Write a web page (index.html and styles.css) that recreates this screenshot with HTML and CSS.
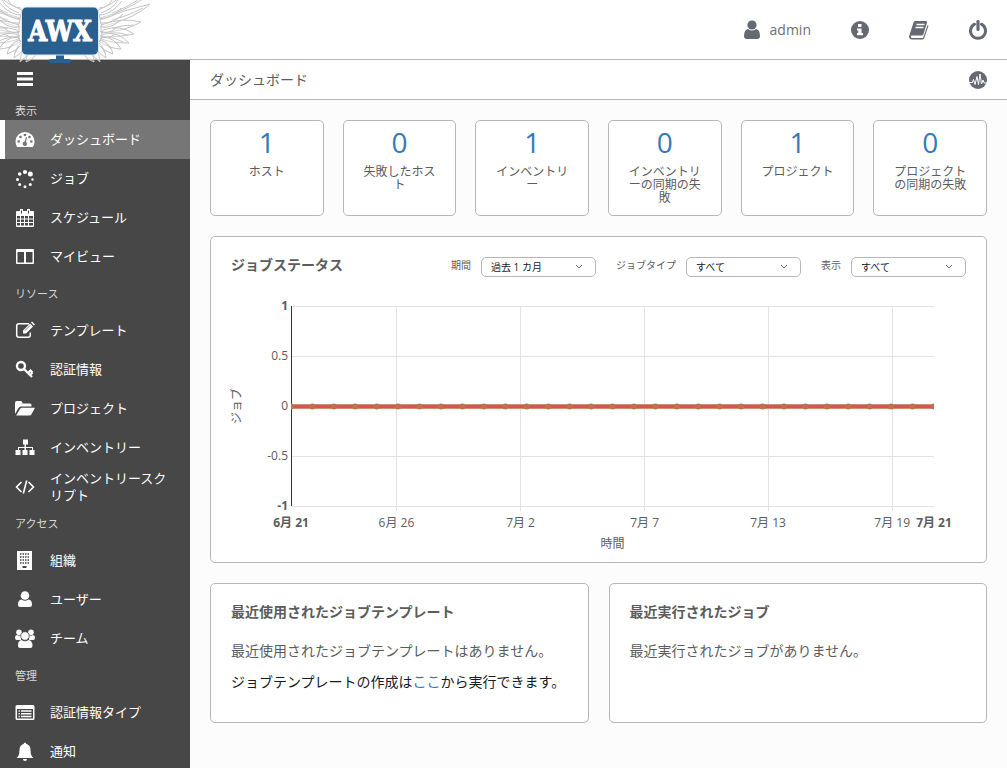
FILE: index.html
```html
<!DOCTYPE html>
<html lang="ja">
<head>
<meta charset="utf-8">
<meta name="viewport" content="width=device-width, initial-scale=1">
<title>AWX</title>
<link rel="stylesheet" href="styles.css">
</head>
<body>
<header class="topbar">
  <a class="logo" href="#" aria-label="AWX">
    <svg width="150" height="64" viewBox="0 0 150 64">
      <defs>
        <g id="wing" class="feather">
          <path d="M98 10Q112 5 124-6L146-3Q124 12 100 18Z"/>
          <path d="M100 20Q124 10 150 4Q136 18 102 27Z"/>
          <path d="M101 25Q122 17 141 22Q126 31 101 33Z"/>
          <path d="M103 30Q120 24 134 34Q120 37 101 37Z"/>
          <path d="M104 34Q118 31 129 43Q114 44 100 39Z"/>
          <path d="M103 37Q115 38 121 49Q110 49 99 41Z"/>
          <path d="M101 40Q111 44 113 54Q105 52 97 44Z"/>
          <path d="M99 43Q106 50 106 58Q99 54 95 47Z"/>
          <path d="M95 48Q100 54 100 62Q93 57 90 51Z"/>
          <path d="M91 51Q94 57 94 62Q88 60 84 55M112 13Q126 8 138 0M112 20Q128 16 143 8M112 28Q124 25 134 25M110 33Q120 32 128 35M108 37Q116 38 123 42"/>
          <path d="M98 15Q110 16 122 1M99 19Q113 18 121 8M100 23Q114 24 123 14M100 27Q111 29 119 21M100 31Q108 35 116 28M100 35Q107 39 114 35M99 8Q108 8 112 0M101 13Q113 9 118 0M105 42L111 49M101 46L105 53"/>
        </g>
      </defs>
      <use href="#wing"/>
      <use href="#wing" transform="matrix(-1 0 0 1 120 0)"/>
      <path d="M56 53h8v6h5q2 0 2 2t-2 2H51q-2 0-2-2t2-2h5z" fill="#2a6090"/>
      <rect x="21.500" y="7" width="77" height="48" rx="5" fill="#2a6090" stroke="#dfe7ee"/>
      <text class="logo-text" x="60" y="41" text-anchor="middle">AWX</text>
    </svg>
  </a>
  <nav class="topnav">
    <a class="user" href="#">
      <svg width="16" height="20" viewBox="0 0 16 20"><circle cx="8" cy="5" r="4.600"/><path d="M4 9q4 3 8 0 4 1 4 7 0 3-3 3H3q-3 0-3-3 0-6 4-7z"/></svg>
      <span>admin</span>
    </a>
    <a href="#" aria-label="情報"><svg width="18" height="18" viewBox="0 0 18 18"><circle cx="9" cy="9" r="9"/><path fill="#fff" d="M7 3h3.500v3H7zM6 7.500h4.500V12H12v2.200H6V12h1.300V9.500H6z"/></svg></a>
    <a href="#" aria-label="ドキュメント"><svg width="20" height="20" viewBox="0 0 20 20"><path d="M6 1h11q1.500 0 1 1.500L14.500 14q-.5 1.500-2 1.500H3q-1.500 0-1.300 1.200T3.500 18H14l4.700-13 .8.800-4.300 12.500Q14.800 19.500 13.500 19.500H3q-3-.5-3-3L4.500 2.500Q5 1 6 1z"/><path d="M7.500 4.500h8M6.500 7.500h8" stroke="#fff" stroke-width="1.300"/></svg></a>
    <a href="#" aria-label="ログアウト"><svg width="18" height="20" viewBox="0 0 18 20"><path d="M5.500 4.200A7.500 7.500 0 1 0 12.500 4.200" fill="none" stroke="#646972" stroke-width="3" stroke-linecap="round"/><path d="M9 1.500v8" stroke="#646972" stroke-width="3.200" stroke-linecap="round"/></svg></a>
  </nav>
</header>
<div class="layout">
  <aside class="sidebar">
    <button class="burger" type="button" aria-label="メニュー"><svg width="16" height="14" viewBox="0 0 16 14"><path d="M0 0h16v3H0zM0 5.500h16v3H0zM0 11h16v3H0z"/></svg></button>
    <h2 class="side-head side-head-first">表示</h2>
    <a class="item active" href="#"><svg width="20" height="20" viewBox="0 0 20 20"><path d="M10 2A9.500 9.500 0 0 0 .5 11.500q0 3 1.500 5.500h16q1.500-2.500 1.500-5.500A9.500 9.500 0 0 0 10 2z"/><g fill="#767676"><circle cx="3.700" cy="11.500" r="1.300"/><circle cx="5.500" cy="7" r="1.300"/><circle cx="10" cy="5" r="1.300"/><circle cx="14.500" cy="7" r="1.300"/><circle cx="16.300" cy="11.500" r="1.300"/><path d="M11 7l1 .3-1 4.700a2.200 2.200 0 1 1-1.500-.3z"/></g></svg><span>ダッシュボード</span></a>
    <a class="item" href="#"><svg width="20" height="20" viewBox="0 0 20 20"><circle cx="10" cy="3" r="2.100"/><circle cx="15.300" cy="5" r="2.500"/><circle cx="17.500" cy="10.500" r="1.200"/><circle cx="15.300" cy="15.500" r="1.500"/><circle cx="10" cy="17.800" r="1.500"/><circle cx="4.700" cy="15.500" r="1.500"/><circle cx="2.500" cy="10.500" r="1.500"/><circle cx="4.700" cy="5" r="1.800"/></svg><span>ジョブ</span></a>
    <a class="item" href="#"><svg width="20" height="20" viewBox="0 0 20 20"><path fill-rule="evenodd" d="M2 3h3V1h3v2h4V1h3v2h3q1 0 1 1v14q0 1-1 1H2q-1 0-1-1V4q0-1 1-1zm0 5v2.500h3V8zm4 0v2.500h3V8zm4 0v2.500h3V8zm4 0v2.500h4V8zM2 11.500V14h3v-2.500zm4 0V14h3v-2.500zm4 0V14h3v-2.500zm4 0V14h4v-2.500zM2 15v2.500h3V15zm4 0v2.500h3V15zm4 0v2.500h3V15zm4 0v2.500h4V15z"/><path d="M6.500 2.500v3M13.500 2.500v3" stroke="#474747"/></svg><span>スケジュール</span></a>
    <a class="item" href="#"><svg width="20" height="20" viewBox="0 0 20 20"><path fill-rule="evenodd" d="M2 2h16q1 0 1 1v13q0 1-1 1H2q-1 0-1-1V3q0-1 1-1zm.500 3v10.500H9V5zM11 5v10.500h6.500V5z"/></svg><span>マイビュー</span></a>
    <h2 class="side-head">リソース</h2>
    <a class="item" href="#"><svg width="20" height="20" viewBox="0 0 20 20"><path d="M14 2.700H4Q1.700 2.700 1.700 5v9Q1.700 16.300 4 16.300h9q2.300 0 2.300-2.300v-2.500" fill="none" stroke="#fff" stroke-width="1.500"/><path d="M8 9.500L15 2.500l3 3-7 7H8zM16 1.500l1-1 3 3-1 1z"/><path d="M10 9.500l5-5" stroke="#474747" stroke-width=".7"/></svg><span>テンプレート</span></a>
    <a class="item" href="#"><svg width="20" height="20" viewBox="0 0 20 20"><circle cx="6" cy="6" r="4" fill="none" stroke="#fff" stroke-width="2.400"/><path d="M9 9l8 8M13 13l2.500-2.500 2 2M15 15l2.500-2.500" fill="none" stroke="#fff" stroke-width="2.200"/></svg><span>認証情報</span></a>
    <a class="item" href="#"><svg width="20" height="20" viewBox="0 0 20 20"><path d="M0 15V4q0-2 2-2h4q1.500 0 1.500 2.500H15q1.500 0 1.500 1.500v1.500H6q-1.500 0-2.500 1.500zM1.200 16.500L5 10q.7-1.200 2-1.200h13l-3.500 6.500q-.7 1.200-2 1.200z"/></svg><span>プロジェクト</span></a>
    <a class="item" href="#"><svg width="20" height="20" viewBox="0 0 20 20"><path d="M8 1.500h5v5h-2V9h7v3h1.500v5h-5v-5H17v-2h-6v2h1.500v5h-5v-5H9.500v-2H4v2h1.500v5h-5v-5H3V9h6.500V6.500H8z"/></svg><span>インベントリー</span></a>
    <a class="item" href="#"><svg width="20" height="20" viewBox="0 0 20 20"><path d="M6.500 5L1.500 10l5 5M13.500 5l5 5-5 5M11.700 3.500L8.300 16.500" fill="none" stroke="#fff" stroke-width="1.600"/></svg><span>インベントリースクリプト</span></a>
    <h2 class="side-head">アクセス</h2>
    <a class="item" href="#"><svg width="20" height="20" viewBox="0 0 20 20"><path d="M2 0h15v19H2z"/><path d="M5 3h9M5 6h9M5 9h9M5 12h9" stroke="#474747" stroke-width="1.300" stroke-dasharray="1.500 1"/><path d="M7.500 15h4v2h-4z" fill="#474747"/></svg><span>組織</span></a>
    <a class="item" href="#"><svg width="20" height="20" viewBox="0 0 20 20"><circle cx="10" cy="5.500" r="4.300"/><path d="M6.500 9.500q3.500 2.500 7 0 3.500.5 3.500 5 0 2.500-2.500 2.500h-9Q3 17 3 14.500q0-4.500 3.500-5z"/></svg><span>ユーザー</span></a>
    <a class="item" href="#"><svg width="20" height="20" viewBox="0 0 20 20"><circle cx="4" cy="3.300" r="2.800"/><circle cx="16" cy="3.300" r="2.800"/><path d="M2 6q2 1.500 4 0v5H2q-2 0-2-2.500T2 6zM18 6q-2 1.500-4 0v5h4q2 0 2-2.500T18 6z"/><path d="M6.500 11q3.500 2.500 7 0 4 .5 4 5.500 0 2.500-2.500 2.500H5.500Q3 19 3 16.500q0-5 3.500-5.500z"/><circle cx="10" cy="7" r="4.300" stroke="#474747" stroke-width=".8"/></svg><span>チーム</span></a>
    <h2 class="side-head">管理</h2>
    <a class="item" href="#"><svg width="20" height="20" viewBox="0 0 20 20"><path fill-rule="evenodd" d="M2 2h16q1.500 0 1.500 1.500v12Q19.500 17 18 17H2Q.5 17 .5 15.500v-12Q.5 2 2 2zm0 4v9.500h16V6z"/><path d="M3.500 8h1.300M3.500 10.700h1.300M3.500 13.400h1.300M6 8h10.500M6 10.700h10.500M6 13.400h10.500" stroke="#fff" stroke-width="1.500"/></svg><span>認証情報タイプ</span></a>
    <a class="item" href="#"><svg width="20" height="20" viewBox="0 0 20 20"><path d="M10 .5q1.300 0 1.300 1.500Q15.500 3 15.500 8q0 6 3 8h-17q3-2 3-8 0-5 4.200-6Q8.700.5 10 .5zM8 17h4q0 2-2 2t-2-2z"/></svg><span>通知</span></a>
  </aside>
  <main class="main">
    <div class="crumbs">
      <h1>ダッシュボード</h1>
      <a href="#" aria-label="アクティビティーストリーム"><svg width="18" height="18" viewBox="0 0 18 18"><circle cx="9" cy="9" r="9" fill="#646972"/><path d="M0 11.500h3.500l1-3 1.500 5 2-8 1.500 8L11 3l1.500 10 1.500-4 1.200 3H18" fill="none" stroke="#fff"/></svg></a>
    </div>
    <div class="content">
      <section class="counts">
        <a class="card count" href="#"><b>1</b><span>ホスト</span></a>
        <a class="card count" href="#"><b>0</b><span>失敗したホスト</span></a>
        <a class="card count" href="#"><b>1</b><span>インベントリー</span></a>
        <a class="card count" href="#"><b>0</b><span>インベントリーの同期の失敗</span></a>
        <a class="card count" href="#"><b>1</b><span>プロジェクト</span></a>
        <a class="card count" href="#"><b>0</b><span>プロジェクトの同期の失敗</span></a>
      </section>
      <section class="card graph">
        <div class="graph-head">
          <h2>ジョブステータス</h2>
          <div class="filters">
            <label for="period">期間</label>
            <span class="pick"><select id="period"><option>過去 1 カ月</option></select><svg width="8" height="6" viewBox="0 0 8 6"><path d="M1 1l3 3 3-3"/></svg></span>
            <label for="type">ジョブタイプ</label>
            <span class="pick"><select id="type"><option>すべて</option></select><svg width="8" height="6" viewBox="0 0 8 6"><path d="M1 1l3 3 3-3"/></svg></span>
            <label for="view">表示</label>
            <span class="pick"><select id="view"><option>すべて</option></select><svg width="8" height="6" viewBox="0 0 8 6"><path d="M1 1l3 3 3-3"/></svg></span>
          </div>
        </div>
        <div class="plot">
          <svg id="chart" class="chart" width="100%" height="245">
            <g class="grid">
              <line x1="0" x2="100%" y1="0" y2="0"/><line x1="0" x2="100%" y1="50" y2="50"/><line x1="0" x2="100%" y1="150" y2="150"/><line x1="0" x2="100%" y1="200" y2="200"/>
              <line x1="16.400%" x2="16.400%" y1="0" y2="205"/><line x1="35.700%" x2="35.700%" y1="0" y2="205"/><line x1="55%" x2="55%" y1="0" y2="205"/><line x1="74.200%" x2="74.200%" y1="0" y2="205"/><line x1="93.500%" x2="93.500%" y1="0" y2="205"/>
            </g>
            <line class="axis" x1="0" x2="0" y1="0" y2="200"/>
            <svg x="0" y="0" width="100%" height="200">
              <rect class="series-under" x="0" y="98" width="100%" height="5"/>
              <rect class="series" x="0" y="99" width="100%" height="3"/>
              <g id="points" class="points"></g>
            </svg>
            <g class="ylab">
              <text class="strong" x="-3" y="4">1</text><text x="-3" y="54">0.5</text><text x="-3" y="104">0</text><text x="-3" y="154">-0.5</text><text class="strong" x="-3" y="204">-1</text>
            </g>
            <g class="xlab">
              <text class="strong" x="0" y="221">6月 21</text><text x="16.400%" y="221">6月 26</text><text x="35.700%" y="221">7月 2</text><text x="55%" y="221">7月 7</text><text x="74.200%" y="221">7月 13</text><text x="93.500%" y="221">7月 19</text><text class="strong" x="100%" y="221">7月 21</text>
              <text x="50%" y="242">時間</text>
              <text transform="translate(-50 100) rotate(-90)">ジョブ</text>
            </g>
          </svg>
        </div>
      </section>
      <section class="lists">
        <article class="card list"><h2>最近使用されたジョブテンプレート</h2><p>最近使用されたジョブテンプレートはありません。</p><p class="hint">ジョブテンプレートの作成は<a href="#">ここ</a>から実行できます。</p></article>
        <article class="card list"><h2>最近実行されたジョブ</h2><p>最近実行されたジョブがありません。</p></article>
      </section>
    </div>
  </main>
</div>
<script src="chart.js"></script>
</body>
</html>
```
FILE: chart.js
```js
const points = document.getElementById('points');
for (let day = 0; day <= 30; day++) {
  const dot = document.createElementNS('http://www.w3.org/2000/svg', 'circle');
  dot.setAttribute('cx', (day / 30 * 100) + '%');
  dot.setAttribute('cy', 100.5);
  dot.setAttribute('r', 3);
  points.append(dot);
}
```
FILE: styles.css
```css
* { box-sizing: border-box; }
body {
  margin: 0;
  height: 100vh;
  display: flex;
  flex-direction: column;
  overflow: hidden;
  font: 14px/16px "Open Sans", "Noto Sans CJK JP", sans-serif;
  color: #5c5c5c;
  background: #fcfcfc;
}
h1, h2, p { margin: 0; font-size: 14px; }
a { color: inherit; text-decoration: none; }
svg { display: block; flex: none; }

.topbar {
  height: 60px;
  flex: none;
  display: flex;
  justify-content: space-between;
  background: #fff;
  border-bottom: 1px solid #b7b7b7;
}
.logo { position: relative; z-index: 1; height: 59px; }
.feather { fill: #fff; fill-opacity: .3; stroke: #c4c4c4; stroke-width: 1; }
.logo-text { font: bold 27px "DejaVu Serif Condensed", "DejaVu Serif", serif; fill: #fff; stroke: #fff; stroke-width: 1; }
.topnav { display: flex; align-items: center; gap: 40px; padding-right: 20px; fill: #646972; }
.user { display: flex; align-items: center; gap: 10px; color: #707070; }

.layout { flex: 1; min-height: 0; display: flex; }
.sidebar { width: 190px; flex: none; overflow: hidden; background: #474747; color: #fff; fill: #fff; }
.burger { display: block; height: 41px; padding: 0 17px 4px; border: 0; background: none; fill: #fff; }
.side-head { height: 35px; padding: 0 15px; font-size: 11px; font-weight: 400; line-height: 35px; color: #d7d7d7; }
.side-head-first { height: 19px; line-height: 19px; }
.item { height: 39px; padding: 0 20px 0 15px; display: flex; align-items: center; gap: 15px; font-size: 13px; line-height: 17px; }
.active { background: #767676; border-left: 5px solid #fff; padding-left: 10px; }

.main { flex: 1; min-width: 0; overflow: hidden; }
.crumbs { height: 40px; padding: 0 20px; display: flex; align-items: center; justify-content: space-between; background: #fff; border-bottom: 1px solid #b7b7b7; }
.crumbs h1 { font-weight: 400; }
.content { padding: 20px; display: grid; gap: 20px; }
.card { background: #fff; border: 1px solid #b7b7b7; border-radius: 5px; }
.counts { display: grid; grid-template-columns: repeat(6, minmax(0, 1fr)); gap: 19px; }
.count { min-height: 96px; padding: 5px 18px; text-align: center; font-size: 12px; line-height: 13px; }
.count b { display: block; margin-bottom: 7px; font-size: 28px; font-weight: 400; line-height: 32px; color: #337ab7; }
.count span { display: block; }

.graph { padding: 20px 20px 11px; }
.graph-head { display: flex; justify-content: space-between; }
.filters { display: flex; font-size: 10px; }
.filters label { margin: 0 10px 0 20px; }
.pick { position: relative; width: 115px; }
.pick select { appearance: none; display: block; width: 100%; height: 20px; padding: 0 9px; border: 1px solid #b7b7b7; border-radius: 5px; background: #fff; color: #161b1f; font: inherit; }
.pick svg { position: absolute; right: 13px; top: 7px; fill: none; stroke: #646972; pointer-events: none; }
.plot { padding: 29px 32px 0 60px; }
.chart { overflow: visible; font-size: 12px; fill: #5c5c5c; }
.grid { stroke: #e2e2e2; shape-rendering: crispEdges; }
.axis { stroke: #333; shape-rendering: crispEdges; }
.series-under { fill: #cd9275; }
.series { fill: #d9534f; }
.points { fill: #b87350; }
.ylab { text-anchor: end; }
.xlab { text-anchor: middle; }
.strong { font-weight: 700; }

.lists { display: grid; grid-template-columns: repeat(2, minmax(0, 1fr)); gap: 20px; }
.list { min-height: 140px; padding: 20px; }
.list p { margin-top: 23px; }
.list .hint { margin-top: 15px; color: #161b1f; }
.hint a { color: #337ab7; }
```
